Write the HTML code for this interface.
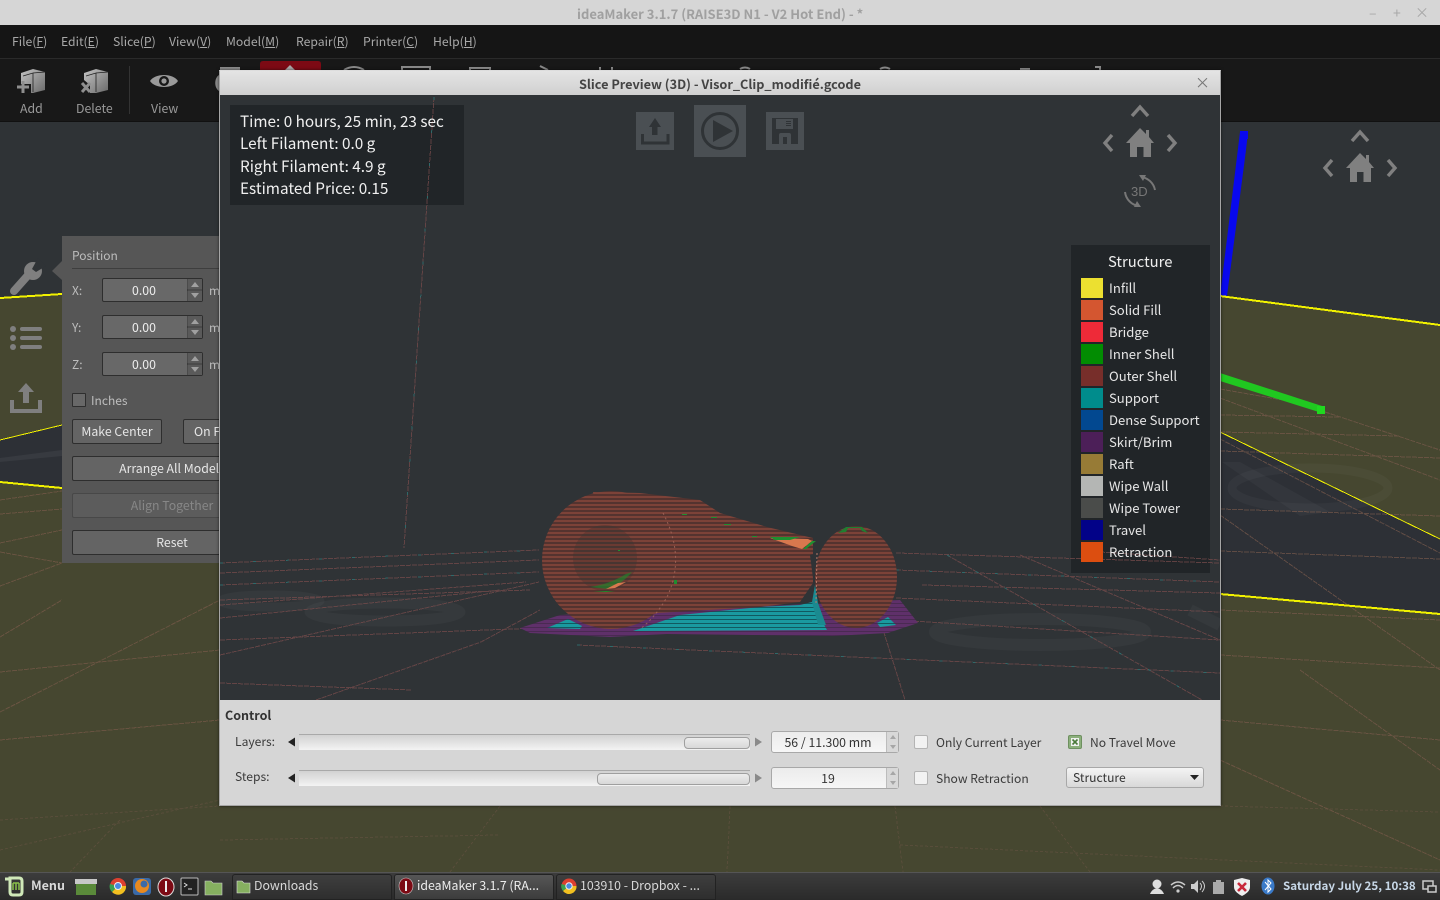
<!DOCTYPE html>
<html><head><meta charset="utf-8"><style>
html,body{margin:0;padding:0;width:1440px;height:900px;overflow:hidden;background:#2f3336}
*{box-sizing:border-box}
body{font-family:"Noto Sans CJK JP","Liberation Sans",sans-serif;position:relative}
.t{position:absolute;white-space:nowrap;line-height:20px;height:20px}
.b{position:absolute}
u{text-decoration:underline;text-underline-offset:1px}
.m{color:#a8a8a8;font-size:12.2px;top:31px}
.tb{color:#9a9a9a;font-size:12.300px;top:98px}
.p{color:#bdbdbd;font-size:12px}
.i{color:#f0f0f0;font-size:15.300px;left:240px}
.btn{position:absolute;background:#646464;border:1px solid #2e2e2e;border-radius:2px;color:#e6e6e6;font-size:12.300px;text-align:center;height:25px;line-height:22px;overflow:hidden;white-space:nowrap}
.ln{position:absolute;left:72px;width:147px;height:1px}
.spin{position:absolute;left:102px;width:101px;height:24px;background:#686868;border:1px solid #2e2e2e;border-radius:2px;color:#eee;font-size:12.300px;line-height:22px;padding-right:17px;text-align:center}
.sw{position:absolute;left:1081px;width:22px;height:20px}
.lg{color:#e6e6e6;font-size:13.100px;left:1109px}
.c{color:#3a3a3a;font-size:12.100px}
.ck{position:absolute;width:14px;height:14px;background:#f2f2f2;border:1px solid #b4b4b4;border-radius:2px}
.sb{position:absolute;left:771px;width:128px;height:22px;background:linear-gradient(#ececec,#f6f6f6);border:1px solid #a8a8a8;border-radius:3px;color:#333;font-size:12.300px;line-height:20px;text-align:center;padding-right:14px}
.sb i{position:absolute;right:0;top:0;bottom:0;width:12px;background:#d8d8d8;border-left:1px solid #bcbcbc}
.tr{position:absolute;left:299px;width:451px;height:16px;background:linear-gradient(#d2d2d2,#f3f3f3);border-top:1px solid #a9a9a9}
.hd{position:absolute;right:0;top:2px;height:12px;background:linear-gradient(#ececec,#d8d8d8);border:1px solid #9f9f9f;border-radius:4px}
.task{color:#d8d8d8;font-size:12.300px;top:875px}
.tk{position:absolute;top:874px;height:26px;background:linear-gradient(#3e3e3e,#2e2e2e);border:1px solid #222;border-radius:3px 3px 0 0}
</style></head><body>

<!-- main scene background -->
<svg class="b" style="left:0;top:122px" width="1440" height="750" viewBox="0 122 1440 750">
<rect x="0" y="122" width="1440" height="750" fill="#2f3336"/>
<polygon points="0,298 62,294 1220,296 1440,325 1440,872 0,872" fill="#464730"/>
<polygon points="0,440 62,425 1220,432 1440,539 1440,614 1220,594 62,488 0,482" fill="#2d3036"/>
<ellipse cx="1310" cy="488" rx="78" ry="20" fill="none" stroke="#fff" stroke-opacity=".03" stroke-width="9"/>
<polygon points="1222,462 1240,462 1330,512 1300,516" fill="#fff" fill-opacity=".03"/>
<polygon points="0,458 62,450 62,456 0,462" fill="#fff" fill-opacity=".05"/>
<g fill="none" stroke="#7b5a4c" stroke-width="1" stroke-dasharray="5 1" shape-rendering="crispEdges" opacity=".65">
<path d="M1325 412L1440 450M1220 398L1440 480M1220 415L1340 417M1220 432L1400 436M1220 451L1440 458M1220 439L1440 553M1220 509L1440 516M1220 515L1440 670M1220 551L1440 559M1220 610L1440 620M1220 389L1300 403"/>
<path d="M0 500L62 491M0 514L62 509M0 543L62 530M0 552L62 563M0 586L62 563M0 637L62 600M0 672L220 650M0 712L220 600M0 740L220 720M1300 670L1440 770M1220 655L1440 668M1220 720L1440 740M1220 760L1440 860"/>
</g>
<g fill="none" stroke="#7b5a4c" stroke-width="1" stroke-dasharray="3 2" shape-rendering="crispEdges" opacity=".35">
<path d="M0 850L220 800M730 806L727 872M895 806L903 872M1040 806L1090 872M1220 806L1440 812M0 820L220 806M500 806L450 872M220 840L500 835M900 845L1440 870M120 820L70 872"/>
</g>
<polygon points="1240,132 1248,132 1246,150 1227,296 1220,296" fill="#0808ee"/>
<rect x="1240" y="131" width="8" height="8" fill="#0808ee"/>
<polygon points="1220,373 1322,406 1322,413 1220,381" fill="#20c820"/>
<rect x="1317" y="406" width="8" height="8" fill="#20d820"/>
<g fill="none" shape-rendering="crispEdges">
<path d="M0 298L62 294M1220 296L1440 325" stroke="#f2f200" stroke-width="2"/>
<path d="M0 440L62 425M1220 432L1440 539" stroke="#f2f200" stroke-width="1"/>
<path d="M0 482L62 488M1220 594L1440 614" stroke="#f2f200" stroke-width="2"/>
</g>
</svg>

<!-- titlebar + menu -->
<div class="b" style="left:0;top:0;width:1440px;height:25px;background:#d6d6d6"></div>
<div class="t" style="left:577px;top:4px;font-size:13px;font-weight:700;color:#a0a0a0">ideaMaker 3.1.7 (RAISE3D N1 - V2 Hot End) - *</div>
<div class="t" style="left:1369px;top:3px;font-size:14px;color:#a8a8a8">–</div>
<div class="t" style="left:1393px;top:3px;font-size:14px;color:#a8a8a8">+</div>
<div class="t" style="left:1415px;top:3px;font-size:14px;color:#a8a8a8">×</div>
<div class="b" style="left:0;top:25px;width:1440px;height:33px;background:#151515"></div>
<div class="b" style="left:0;top:58px;width:1440px;height:64px;background:#181818;border-top:1px solid #2a2a2a;border-bottom:1px solid #111"></div>
<div class="t m" style="left:12px">File(<u>F</u>)</div>
<div class="t m" style="left:61px">Edit(<u>E</u>)</div>
<div class="t m" style="left:113px">Slice(<u>P</u>)</div>
<div class="t m" style="left:169px">View(<u>V</u>)</div>
<div class="t m" style="left:226px">Model(<u>M</u>)</div>
<div class="t m" style="left:296px">Repair(<u>R</u>)</div>
<div class="t m" style="left:363px">Printer(<u>C</u>)</div>
<div class="t m" style="left:433px">Help(<u>H</u>)</div>

<!-- toolbar -->
<svg class="b" style="left:0;top:58px" width="1440" height="64" viewBox="0 58 1440 64">
<defs><linearGradient id="gg" x1="0" y1="0" x2="1" y2="1"><stop offset="0" stop-color="#c4c4c4"/><stop offset="1" stop-color="#6a6a6a"/></linearGradient></defs>
<g fill="url(#gg)">
<polygon points="21,73 33,69 45,72 45,90 33,93 31,93 31,84 21,84"/>
<polygon points="84,73 96,69 108,72 108,90 96,93 90,93 90,85 84,80"/>
</g>
<path d="M23 76L33 73V92M33 73L45 72" stroke="#222" stroke-width=".8" fill="none"/>
<path d="M86 76L96 73V92M96 73L108 72" stroke="#222" stroke-width=".8" fill="none"/>
<path d="M17 87H29M23 81V93" stroke="#8e8e8e" stroke-width="3"/>
<path d="M82 83L90 92M90 83L82 92" stroke="#8e8e8e" stroke-width="3"/>
<rect x="129" y="66" width="1" height="48" fill="#333"/>
<path d="M150 81C155 73 173 73 178 81C173 89 155 89 150 81Z" fill="#9a9a9a"/>
<circle cx="164" cy="81" r="5" fill="#181818"/><circle cx="164" cy="81" r="2.600" fill="#9a9a9a"/>
<path d="M219 75C214 78 214 88 219 91Z" fill="#8a8a8a"/>
<rect x="220" y="67" width="20" height="3" fill="#8a8a8a"/>
<path d="M260 70V64Q260 61 263 61H318Q321 61 321 64V70Z" fill="#7c0a14"/>
<polygon points="285,70 290,65 295,70" fill="#aaa"/>
<path d="M344 70Q354 64 364 70" stroke="#8a8a8a" stroke-width="2" fill="none"/>
<path d="M402 70V67H430V70" stroke="#8a8a8a" stroke-width="2" fill="none"/>
<path d="M470 70V68H490V70M540 66L548 70M600 67V70M612 67V70M740 69Q745 66 750 69M880 69Q885 66 890 69M1020 69H1030M1095 67H1100V70" stroke="#8a8a8a" stroke-width="2" fill="none"/>
</svg>
<div class="t tb" style="left:20px">Add</div>
<div class="t tb" style="left:76px">Delete</div>
<div class="t tb" style="left:151px">View</div>

<!-- left icon column -->
<svg class="b" style="left:0;top:255px" width="62" height="165" viewBox="0 255 62 165">
<g fill="#7f7f7f">
<circle cx="33" cy="271" r="9"/>
<path d="M14 291L30 273" stroke="#7f7f7f" stroke-width="8" stroke-linecap="round" fill="none"/>
<polygon points="32,269 38,258 46,266 36,272" fill="#2f3336"/>
<circle cx="13" cy="329" r="3"/><circle cx="13" cy="338" r="3"/><circle cx="13" cy="347" r="3"/>
<rect x="20" y="327" width="22" height="4" rx="2"/><rect x="20" y="336" width="22" height="4" rx="2"/><rect x="20" y="345" width="22" height="4" rx="2"/>
<polygon points="26,383 34,392 29,392 29,403 23,403 23,392 18,392"/>
</g>
<path d="M12 400V411H40V400" stroke="#7f7f7f" stroke-width="4" fill="none"/>
</svg>

<!-- left panel -->
<div class="b" style="left:62px;top:236px;width:158px;height:327px;background:#565656"></div>
<svg class="b" style="left:52px;top:260px" width="10" height="20"><polygon points="0,11 10,1 10,20" fill="#565656"/></svg>
<div class="t p" style="left:72px;top:246px">Position</div>
<div class="ln" style="top:268px;background:#3e3e3e"></div>
<div class="t p" style="left:72px;top:281px">X:</div>
<div class="t p" style="left:72px;top:318px">Y:</div>
<div class="t p" style="left:72px;top:355px">Z:</div>
<div class="spin" style="top:278px">0.00</div>
<div class="spin" style="top:315px">0.00</div>
<div class="spin" style="top:352px">0.00</div>
<svg class="b" style="left:187px;top:278px" width="16" height="98">
<g fill="#5a5a5a"><rect x="1" y="1" width="14" height="10"/><rect x="1" y="13" width="14" height="10"/><rect x="1" y="38" width="14" height="10"/><rect x="1" y="50" width="14" height="10"/><rect x="1" y="75" width="14" height="10"/><rect x="1" y="87" width="14" height="10"/></g>
<path d="M0 0V24M0 37V61M0 74V98" stroke="#2e2e2e"/>
<path d="M0 12H16M0 49H16M0 86H16" stroke="#2e2e2e"/>
<g fill="#a0a0a0"><polygon points="8,4 12,9 4,9"/><polygon points="4,15 12,15 8,20"/><polygon points="8,41 12,46 4,46"/><polygon points="4,52 12,52 8,57"/><polygon points="8,78 12,83 4,83"/><polygon points="4,89 12,89 8,94"/></g>
</svg>
<div class="t p" style="left:209px;top:281px;width:10px;overflow:hidden">m</div>
<div class="t p" style="left:209px;top:318px;width:10px;overflow:hidden">m</div>
<div class="t p" style="left:209px;top:355px;width:10px;overflow:hidden">m</div>
<div class="b" style="left:72px;top:393px;width:14px;height:14px;background:#686868;border:1px solid #2e2e2e;border-radius:1px"></div>
<div class="t p" style="left:91px;top:391px">Inches</div>
<div class="btn" style="left:72px;top:419px;width:90px">Make Center</div>
<div class="btn" style="left:183px;top:419px;width:50px;text-align:left;padding-left:10px">On F</div>
<div class="btn" style="left:72px;top:456px;width:200px">Arrange All Models</div>
<div class="btn" style="left:72px;top:493px;width:200px;background:#5c5c5c;border-color:#484848;color:#878787">Align Together</div>
<div class="btn" style="left:72px;top:530px;width:200px">Reset</div>

<!-- right nav main -->
<svg class="b" style="left:1310px;top:125px" width="100" height="65" viewBox="1310 125 100 65">
<path d="M1352 141L1360 132L1368 141M1332 160L1325 168L1332 176M1388 160L1395 168L1388 176" stroke="#808080" stroke-width="3.400" fill="none"/>
<path d="M1346 168L1360 153L1366 159V155H1369V162L1374 168H1371V182H1363.500V172H1357V182H1350V168Z" fill="#808080"/>
</svg>

<!-- dialog -->
<div class="b" style="left:219px;top:70px;width:1002px;height:736px;background:#2f3336;border:1px solid #a6a6a6;border-top-color:#ddd;box-shadow:0 0 3px rgba(0,0,0,.6)"></div>
<div class="b" style="left:220px;top:71px;width:1000px;height:24px;background:linear-gradient(#e4e4e4,#d0d0d0)"></div>
<div class="t" style="left:579px;top:73.500px;font-size:12.700px;font-weight:700;color:#444">Slice Preview (3D) - Visor_Clip_modifié.gcode</div>
<div class="t" style="left:1195px;top:73px;font-size:15px;color:#777">×</div>
<div class="b" style="left:220px;top:95px;width:1000px;height:605px;background:#2f3336"></div>

<svg class="b" style="left:220px;top:95px" width="1000" height="605" viewBox="220 95 1000 605">
<defs>
<pattern id="st2" patternUnits="userSpaceOnUse" width="8" height="4"><rect width="8" height="2" fill="#7c4238" shape-rendering="crispEdges"/><rect y="2" width="8" height="2" fill="#54332f" shape-rendering="crispEdges"/></pattern>
<pattern id="sth" patternUnits="userSpaceOnUse" width="8" height="4"><rect width="8" height="2" fill="#6a3a32" shape-rendering="crispEdges"/><rect y="2" width="8" height="2" fill="#483531" shape-rendering="crispEdges"/></pattern>
<pattern id="stt" patternUnits="userSpaceOnUse" width="8" height="4"><rect width="8" height="3" fill="#1a9aa0" shape-rendering="crispEdges"/><rect y="3" width="8" height="1" fill="#115a60" shape-rendering="crispEdges"/></pattern>
<pattern id="stp" patternUnits="userSpaceOnUse" width="8" height="4"><rect width="8" height="3" fill="#5f306a" shape-rendering="crispEdges"/><rect y="3" width="8" height="1" fill="#4a2a52" shape-rendering="crispEdges"/></pattern>
</defs>
<!-- info + legend bg -->
<rect x="230" y="105" width="234" height="100" fill="#212528"/>
<rect x="1071" y="245" width="139" height="328" fill="#212528"/>
<!-- ghost logos -->
<g fill="none" stroke="#fff" stroke-opacity=".03">
<ellipse cx="1040" cy="632" rx="105" ry="13" stroke-width="12"/>
<ellipse cx="385" cy="612" rx="75" ry="9" stroke-width="11"/>
<ellipse cx="270" cy="601" rx="50" ry="6" stroke-width="9"/>
<path d="M1190 610L1220 625" stroke-width="12"/>
</g>
<!-- grid -->
<g fill="none" stroke="#7a4c4c" stroke-width="1" stroke-dasharray="5 1" shape-rendering="crispEdges" opacity=".7">
<path d="M434 97L404 548M220 655L539 582M316 700L481 642L540 610M947 555L1202 700M220 563L539 550M220 573L539 560M220 585L539 572M220 605L526 582M220 618L500 590"/>
<path d="M577 645L1220 673M220 683L412 690M896 553L1220 563M896 570L1220 582M922 585L1220 593M896 598L1220 612M896 620L1220 640M220 640L540 628M220 600L530 590M880 620L905 700M1020 555L1220 640M1100 552L1220 560"/>
</g>
<g fill="none" stroke="#2f6a6a" stroke-width="1" stroke-dasharray="3 30" shape-rendering="crispEdges">
<path d="M434 97L404 548M220 563L539 550M220 585L539 572M896 570L1220 582M947 555L1202 700M577 645L1220 673"/>
</g>
<!-- brim -->
<path d="M520 628L560 615L900 600L918 623L888 633L833 636L667 634L610 637L530 633Z" fill="url(#stp)"/>
<!-- support -->
<polygon points="633,631 680,615 760,607 800,605 812,602 820,617 827,630" fill="url(#stt)"/>
<polygon points="547,628 568,619 582,626 580,629" fill="url(#stt)"/>
<polygon points="877,623 888,617 896,625 880,627" fill="url(#stt)"/>
<polygon points="812,602 815,585 818,603 826,625 818,625" fill="#1a8a90"/>
<!-- body -->
<path d="M593 492L640 493L700 500L720 513L767 527L813 538L813 583L800 602L760 607L657 613L617 629Z" fill="url(#st2)"/>
<ellipse cx="611" cy="560" rx="69" ry="69" fill="url(#st2)"/>
<path d="M663 513Q686 557 667 597Q655 618 640 629" fill="none" stroke="#a86a5c" stroke-width="1" stroke-dasharray="2 3" opacity=".8"/>
<polygon points="810,555 821,552 817,578 813,578" fill="#2f3336"/>
<ellipse cx="605" cy="558" rx="32" ry="33" fill="url(#sth)"/>
<path d="M608 589Q622 584 632 572L626 574Q610 584 590 587Z" fill="#1e8a2a" opacity=".6"/>
<path d="M606 589L618 583L626 582L615 588Z" fill="#d8784e"/>
<path d="M593 591H615L606 592Z" fill="#1e8a2a"/>
<ellipse cx="856" cy="577" rx="41" ry="51" fill="url(#st2)"/>
<path d="M838 533L846 527L862 527L868 533L862 531L860 528H848L846 532Z" fill="#1f7f30"/>
<path d="M770 538L808 539L812 541L802 549L792 546Z" fill="#d8784e"/>
<path d="M770 537H800L790 540H775ZM803 549L812 541L816 541L806 549Z" fill="#1f8f30"/>
<g fill="#1f8f30"><rect x="682" y="514" width="5" height="1"/><rect x="711" y="517" width="6" height="1"/><rect x="724" y="524" width="7" height="1"/><rect x="752" y="536" width="5" height="1"/><rect x="674" y="580" width="3" height="4"/><rect x="618" y="550" width="2" height="1"/></g>
<path d="M817 553L816 605" stroke="#b87a6a" stroke-width="1" stroke-dasharray="2 2" fill="none"/>
<!-- top icons -->
<rect x="636" y="112" width="38" height="38" fill="#4a4f53"/>
<rect x="694" y="105" width="52" height="52" fill="#4a4f53"/>
<rect x="766" y="112" width="38" height="38" fill="#4a4f53"/>
<polygon points="655,118 661,127 657.500,127 657.500,135 652,135 652,127 649,127" fill="#2f3336"/>
<path d="M642.500 134V143H668V134" stroke="#2f3336" stroke-width="3" fill="none"/>
<circle cx="720" cy="131" r="17.500" fill="none" stroke="#2f3336" stroke-width="3"/>
<polygon points="713,120 733,131 713,142" fill="#2f3336"/>
<path d="M772 118H798V144H772Z" fill="#2f3336"/>
<rect x="776" y="119" width="17" height="10" fill="#4a4f53"/>
<rect x="786" y="121" width="5" height="1" fill="#2f3336"/><rect x="786" y="123" width="5" height="1" fill="#2f3336"/><rect x="786" y="125" width="5" height="1" fill="#2f3336"/>
<path d="M779 144V135Q779 133 781 133H789Q791 133 791 135V144H787V137H783V144Z" fill="#4a4f53"/>
<!-- nav -->
<path d="M1132 116L1140 107L1148 116M1112 135L1105 143L1112 151M1168 135L1175 143L1168 151" stroke="#808080" stroke-width="3.400" fill="none"/>
<path d="M1126 143L1140 128L1146 134V130H1149V137L1154 143H1151V157H1143.500V147H1137V157H1130V143Z" fill="#808080"/>
<path d="M1141 177A16 16 0 0 1 1155 190" stroke="#777" stroke-width="2" fill="none"/>
<polygon points="1139,175 1146,175 1143,181" fill="#777"/>
<path d="M1125 192A16 16 0 0 0 1139 206" stroke="#777" stroke-width="2" fill="none"/>
<polygon points="1141,207 1134,207 1137,201" fill="#777"/>
<text x="1131" y="196" font-family="Liberation Sans" font-size="13" fill="#777">3D</text>
</svg>

<div class="t i" style="top:111px">Time: 0 hours, 25 min, 23 sec</div>
<div class="t i" style="top:133px">Left Filament: 0.0 g</div>
<div class="t i" style="top:156px">Right Filament: 4.9 g</div>
<div class="t i" style="top:178px">Estimated Price: 0.15</div>

<div class="t" style="left:1108px;top:252px;font-size:14.800px;color:#eee">Structure</div>
<div class="sw" style="top:278px;background:#ece030"></div><div class="t lg" style="top:277.500px">Infill</div>
<div class="sw" style="top:300px;background:#d45630"></div><div class="t lg" style="top:299.500px">Solid Fill</div>
<div class="sw" style="top:322px;background:#ee2a38"></div><div class="t lg" style="top:321.500px">Bridge</div>
<div class="sw" style="top:344px;background:#028c02"></div><div class="t lg" style="top:343.500px">Inner Shell</div>
<div class="sw" style="top:366px;background:#772e2a"></div><div class="t lg" style="top:365.500px">Outer Shell</div>
<div class="sw" style="top:388px;background:#008c8c"></div><div class="t lg" style="top:387.500px">Support</div>
<div class="sw" style="top:410px;background:#024890"></div><div class="t lg" style="top:409.500px">Dense Support</div>
<div class="sw" style="top:432px;background:#4c1f58"></div><div class="t lg" style="top:431.500px">Skirt/Brim</div>
<div class="sw" style="top:454px;background:#977b36"></div><div class="t lg" style="top:453.500px">Raft</div>
<div class="sw" style="top:476px;background:#b4b6b4"></div><div class="t lg" style="top:475.500px">Wipe Wall</div>
<div class="sw" style="top:498px;background:#4a4c4a"></div><div class="t lg" style="top:497.500px">Wipe Tower</div>
<div class="sw" style="top:520px;background:#020288"></div><div class="t lg" style="top:519.500px">Travel</div>
<div class="sw" style="top:542px;background:#dc4e10"></div><div class="t lg" style="top:541.500px">Retraction</div>

<!-- control panel -->
<div class="b" style="left:220px;top:700px;width:1000px;height:105px;background:#d6d6d6"></div>
<div class="t" style="left:225px;top:705px;font-size:12.500px;font-weight:700;color:#333">Control</div>
<div class="t c" style="left:235px;top:732px">Layers:</div>
<div class="t c" style="left:235px;top:767px">Steps:</div>
<div class="tr" style="top:734px"><div class="hd" style="width:66px"></div></div>
<div class="tr" style="top:770px"><div class="hd" style="width:153px"></div></div>
<svg class="b" style="left:285px;top:735px" width="480" height="50">
<polygon points="3,7 10,2.500 10,11.500" fill="#222"/><polygon points="3,43 10,38.500 10,47.500" fill="#222"/>
<polygon points="477,7 470,2.500 470,11.500" fill="#8a8a8a"/><polygon points="477,43 470,38.500 470,47.500" fill="#8a8a8a"/>
</svg>
<div class="sb" style="top:731px">56 / 11.300 mm<i></i></div>
<div class="sb" style="top:767px">19<i></i></div>
<svg class="b" style="left:887px;top:731px" width="12" height="58"><g fill="#a6a6a6"><polygon points="6,4 9,8 3,8"/><polygon points="3,14 9,14 6,18"/><polygon points="6,40 9,44 3,44"/><polygon points="3,50 9,50 6,54"/></g></svg>
<div class="ck" style="left:914px;top:735px"></div>
<div class="t c" style="left:936px;top:733px">Only Current Layer</div>
<div class="ck" style="left:914px;top:771px"></div>
<div class="t c" style="left:936px;top:769px">Show Retraction</div>
<div class="ck" style="left:1068px;top:735px;background:#8cb07c;border-color:#6e9060"></div>
<svg class="b" style="left:1068px;top:735px" width="14" height="14"><rect x="3" y="3" width="8" height="8" fill="#f0f0f0"/><path d="M4.500 4.500L9.500 9.500M9.500 4.500L4.500 9.500" stroke="#4a7a3a" stroke-width="1.600"/></svg>
<div class="t c" style="left:1090px;top:733px">No Travel Move</div>
<div class="b" style="left:1066px;top:767px;width:138px;height:21px;background:linear-gradient(#f4f4f4,#d8d8d8);border:1px solid #a8a8a8;border-radius:3px"></div>
<div class="t c" style="left:1073px;top:768px;color:#333">Structure</div>
<svg class="b" style="left:1189px;top:774px" width="11" height="7"><polygon points="1,1 10,1 5.500,6" fill="#222"/></svg>

<!-- taskbar -->
<div class="b" style="left:0;top:872px;width:1440px;height:28px;background:linear-gradient(#3c3c3c,#2a2a2a);border-top:1px solid #555"></div>
<div class="tk" style="left:232px;width:160px"></div>
<div class="tk" style="left:394px;width:160px;background:linear-gradient(#565656,#3c3c3c)"></div>
<div class="tk" style="left:556px;width:160px"></div>
<svg class="b" style="left:0;top:872px" width="720" height="28" viewBox="0 872 720 28">
<path d="M5 879H10V892Q10 895 13 895H19Q22 895 22 892V881Q22 878 19 878H10V880" fill="none" stroke="#cfe8b8" stroke-width="3"/>
<path d="M13 890V883M16 890V883M19 890V883M13 883H19" stroke="#8ac04a" stroke-width="1.500" fill="none"/>
<rect x="75" y="879" width="22" height="5" fill="#c8c8c8"/>
<rect x="76" y="884" width="20" height="11" fill="#5a8a3a"/>
<circle cx="118" cy="886" r="8" fill="#dd4030"/><path d="M118 886L126 886A8 8 0 0 1 112 892Z" fill="#f2c020"/><path d="M118 886L112 892A8 8 0 0 1 110 884Z" fill="#3aa050"/><circle cx="118" cy="886" r="3.500" fill="#4a8ae0" stroke="#eee"/>
<rect x="133" y="878" width="18" height="17" rx="3" fill="#3a6aa8"/><circle cx="142" cy="886" r="7" fill="#e88a20"/><circle cx="144" cy="884" r="3.500" fill="#3a6aa8"/>
<ellipse cx="166" cy="887" rx="8" ry="9" fill="#7c0a14" stroke="#ddd"/><rect x="165" y="881" width="2" height="11" fill="#eee"/>
<rect x="181" y="878" width="17" height="17" rx="1" fill="#222" stroke="#bbb"/><path d="M184 883L187 885L184 887M188 889H192" stroke="#ddd" fill="none"/>
<path d="M205 881H211L213 883H222V895H205Z" fill="#86b060" stroke="#d0d0d0" stroke-width=".6"/>
<path d="M237 881H242L244 883H250V893H237Z" fill="#86b060" stroke="#ddd" stroke-width=".6"/>
<ellipse cx="406" cy="886" rx="7" ry="8" fill="#7c0a14" stroke="#ccc" stroke-width=".6"/><rect x="405" y="881" width="2" height="10" fill="#eee"/>
<circle cx="569" cy="886" r="7.500" fill="#dd4030"/><path d="M569 886L576.500 886A7.500 7.500 0 0 1 563 891Z" fill="#f2c020"/><path d="M569 886L563 891A7.500 7.500 0 0 1 561.500 884Z" fill="#3aa050"/><circle cx="569" cy="886" r="3.200" fill="#4a8ae0" stroke="#eee"/>
</svg>
<div class="t task" style="left:31px;font-weight:700;font-size:12.500px">Menu</div>
<div class="t task" style="left:254px">Downloads</div>
<div class="t task" style="left:417px;color:#eee">ideaMaker 3.1.7 (RA...</div>
<div class="t task" style="left:580px">103910 - Dropbox - ...</div>
<div class="t task" style="left:1283px;font-weight:700;font-size:11.600px;color:#c8d8e8;top:876px">Saturday July 25, 10:38</div>
<svg class="b" style="left:1145px;top:872px" width="295" height="28" viewBox="1145 872 295 28">
<circle cx="1157" cy="884" r="4.500" fill="#ddd"/><path d="M1150 894Q1152 889 1157 888Q1162 889 1164 894Z" fill="#ddd"/>
<path d="M1171 885Q1178 879 1185 885M1173 888Q1178 883 1183 888" stroke="#ccc" stroke-width="1.500" fill="none"/><circle cx="1178" cy="891" r="1.600" fill="#ccc"/>
<polygon points="1191,884 1194,884 1198,880 1198,893 1194,889 1191,889" fill="#ccc"/>
<path d="M1200 883Q1203 886 1200 890M1202 881Q1207 886 1202 892" stroke="#ccc" fill="none"/>
<rect x="1213" y="882" width="11" height="12" fill="#aaa"/><rect x="1216" y="880" width="5" height="2" fill="#aaa"/>
<path d="M1234 880L1242 878L1250 880V887Q1250 892 1242 896Q1234 892 1234 887Z" fill="#eee"/><path d="M1238 883L1246 891M1246 883L1238 891" stroke="#c8283a" stroke-width="2.600"/>
<ellipse cx="1268" cy="886" rx="6.500" ry="8.500" fill="#3a7ac8"/><path d="M1265 882L1271 889L1268 892V880L1271 883L1265 890" stroke="#fff" fill="none"/>
<rect x="1423" y="881" width="10" height="8" fill="none" stroke="#ccc" stroke-width="1.500"/><rect x="1428" y="886" width="8" height="6" fill="#2e2e2e" stroke="#ccc" stroke-width="1.500"/>
</svg>
</body></html>
